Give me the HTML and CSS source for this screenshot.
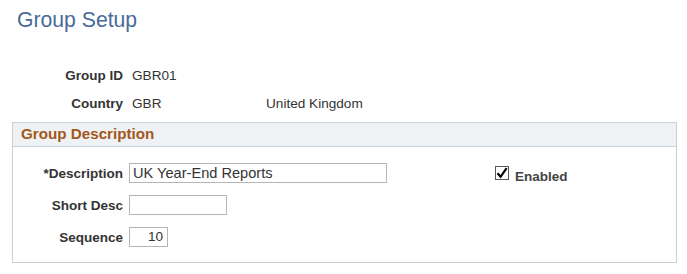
FILE: index.html
```html
<!DOCTYPE html>
<html>
<head>
<meta charset="utf-8">
<link rel="stylesheet" href="styles.css">
</head>
<body>
<h1 class="page-title">Group Setup</h1>
<div class="info">
  <div class="info-row">
    <span class="lbl">Group ID</span>
    <span class="val">GBR01</span>
  </div>
  <div class="info-row">
    <span class="lbl">Country</span>
    <span class="val val-code">GBR</span>
    <span class="val">United Kingdom</span>
  </div>
</div>
<div class="group">
  <div class="group-head">Group Description</div>
  <div class="group-body">
    <div class="fields">
      <div class="field-row">
        <span class="lbl flbl">*Description</span>
        <span class="input input-desc">UK Year-End Reports</span>
      </div>
      <div class="field-row">
        <span class="lbl flbl">Short Desc</span>
        <span class="input input-short"></span>
      </div>
      <div class="field-row">
        <span class="lbl flbl">Sequence</span>
        <span class="input input-seq">10</span>
      </div>
    </div>
    <div class="check">
      <svg class="cb" width="14" height="14" viewBox="0 0 14 14">
        <rect x="0.5" y="0.5" width="13" height="13" fill="#fff" stroke="#555"/>
        <path d="M2.5 7.2 L5.6 10.8 L11.6 2.2" fill="none" stroke="#000" stroke-width="2.2"/>
      </svg>
      <span class="lbl check-lbl">Enabled</span>
    </div>
  </div>
</div>
</body>
</html>
```

FILE: styles.css
```css
html, body {
  margin: 0;
  padding: 0;
  background: #fff;
}
body {
  font-family: "Liberation Sans", Arial, sans-serif;
  font-size: 13.6px;
  color: #333;
  width: 687px;
  height: 274px;
  overflow: hidden;
}
.page-title {
  margin: 0;
  padding: 8px 0 0 17px;
  font-size: 21.2px;
  font-weight: normal;
  color: #4a6a9a;
  line-height: 24px;
}
.info {
  padding-top: 29px;
}
.info-row {
  display: flex;
  align-items: center;
  height: 28px;
}
.lbl {
  font-weight: bold;
  color: #333;
  font-size: 13.5px;
}
.info-row .lbl {
  width: 123px;
  text-align: right;
}
.val {
  color: #333;
  margin-left: 9px;
}
.val-code {
  width: 125px;
}
.group {
  margin: 5px 10px 0 12px;
  border: 1px solid #cbd0d6;
  height: 139px;
}
.group-head {
  background: #eff2f4;
  border-bottom: 1px solid #cbd0d6;
  height: 23px;
  line-height: 22px;
  padding-left: 8px;
  font-weight: bold;
  font-size: 15.2px;
  color: #a4571a;
}
.group-body {
  display: flex;
  padding-top: 16px;
}
.fields {
  display: flex;
  flex-direction: column;
  gap: 12px;
}
.field-row {
  display: flex;
  align-items: center;
  height: 20px;
}
.flbl {
  width: 110px;
  text-align: right;
  margin-right: 6px;
}
.input {
  box-sizing: border-box;
  height: 20px;
  border: 1px solid #b5b5b5;
  background: #fff;
  padding: 0 3px;
  line-height: 18px;
  font-size: 14.6px;
  color: #333;
}
.input-desc { width: 258px; }
.input-short { width: 98px; }
.input-seq { width: 39px; text-align: right; padding-right: 4px; font-size: 13.6px; }
.check {
  display: flex;
  align-items: flex-start;
  gap: 6px;
  margin-left: 108px;
  padding-top: 3px;
}
.check-lbl { color: #444; line-height: 16px; padding-top: 3px; }
.cb { display: block; }
```
